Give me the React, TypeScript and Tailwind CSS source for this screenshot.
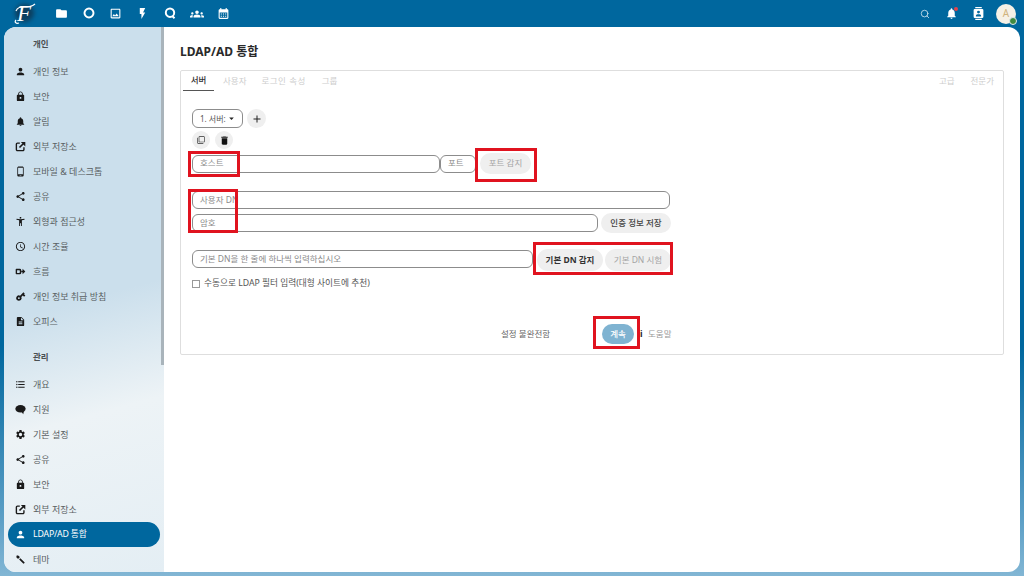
import { MdCalendarMonth, MdFolder, MdGroups, MdOutlineImage, MdFlashOn, MdPerson, MdLock, MdNotifications, MdPhoneAndroid, MdShare, MdAccessibilityNew, MdAccessTime, MdVpnKey, MdDescription, MdFormatListBulleted, MdSettings, MdBrush, MdDelete, MdAdd, MdArrowDropDown, MdFilterNone } from "react-icons/md";
import { LuSearch } from "react-icons/lu";
import type { IconType } from "react-icons";

const FlowIcon: IconType = (props) => (
    <svg viewBox="0 0 16 16" width={props.size} height={props.size} fill="currentColor">
        <path d="M2 4h5a2 2 0 0 1 2 2v4a2 2 0 0 1-2 2H2a1 1 0 0 1-1-1V5a1 1 0 0 1 1-1zm1 2v4h3a1 1 0 0 0 1-1V7a1 1 0 0 0-1-1H3z" />
        <path d="M9 7h2V4l4 4-4 4V9H9z" />
    </svg>
);

const ExternalIcon: IconType = (props) => (
    <svg viewBox="0 0 16 16" width={props.size} height={props.size} fill="none" stroke="currentColor">
        <path d="M7 3H3.5A1.5 1.5 0 0 0 2 4.5v8A1.5 1.5 0 0 0 3.5 14h8a1.5 1.5 0 0 0 1.5-1.5V9" strokeWidth="2" />
        <path d="M6.5 9.5 12 4" strokeWidth="2.4" />
        <path d="M8.5 1.5H15V8z" fill="currentColor" stroke="none" />
    </svg>
);

const BubbleIcon: IconType = (props) => (
    <svg viewBox="0 0 16 16" width={props.size} height={props.size} fill="currentColor">
        <ellipse cx="8" cy="7" rx="7.5" ry="5.5" />
        <path d="M9 11l3 4 1-5z" />
    </svg>
);

const KeyIcon: IconType = (props) => <MdVpnKey size={props.size} className="-rotate-45" />;
const ThemeIcon: IconType = (props) => <MdBrush size={props.size} className="rotate-90" />;

const RingIcon: IconType = (props) => (
    <svg viewBox="0 0 16 16" width={props.size} height={props.size} fill="none" stroke="currentColor" strokeWidth="2.6">
        <circle cx="8" cy="8" r="6" />
    </svg>
);

const TalkIcon: IconType = (props) => (
    <svg viewBox="0 0 16 16" width={props.size} height={props.size} fill="none" stroke="currentColor" strokeWidth="2.6">
        <circle cx="8" cy="7.6" r="5.6" />
        <path d="M11 12l3 3" />
    </svg>
);

const ContactsIcon: IconType = (props) => (
    <svg viewBox="0 0 16 16" width={props.size} height={props.size} fill="currentColor">
        <path d="M4 0h8v1.5H4zM4 14.5h8V16H4z" />
        <path fillRule="evenodd" d="M3.5 2.5h9A1.5 1.5 0 0 1 14 4v8a1.5 1.5 0 0 1-1.5 1.5h-9A1.5 1.5 0 0 1 2 12V4a1.5 1.5 0 0 1 1.5-1.5zM8 4.5A1.8 1.8 0 1 0 8 8.100A1.8 1.8 0 0 0 8 4.500zM4.800 11.800h6.400V10.800C11.200 9.500 9.500 9 8 9S4.800 9.500 4.800 10.800z" />
    </svg>
);

const personal: [IconType, string][] = [
    [MdPerson, "개인 정보"],
    [MdLock, "보안"],
    [MdNotifications, "알림"],
    [ExternalIcon, "외부 저장소"],
    [MdPhoneAndroid, "모바일 & 데스크톱"],
    [MdShare, "공유"],
    [MdAccessibilityNew, "외형과 접근성"],
    [MdAccessTime, "시간 조율"],
    [FlowIcon, "흐름"],
    [KeyIcon, "개인 정보 취급 방침"],
    [MdDescription, "오피스"],
];

const admin: [IconType, string, boolean?][] = [
    [MdFormatListBulleted, "개요"],
    [BubbleIcon, "지원"],
    [MdSettings, "기본 설정"],
    [MdShare, "공유"],
    [MdLock, "보안"],
    [ExternalIcon, "외부 저장소"],
    [MdPerson, "LDAP/AD 통합", true],
    [ThemeIcon, "테마"],
];

const topIcons: [IconType, number][] = [
    [MdFolder, 13],
    [RingIcon, 12],
    [MdOutlineImage, 13],
    [MdFlashOn, 13],
    [TalkIcon, 12],
    [MdGroups, 14],
    [MdCalendarMonth, 13],
];

const NavItem = ({ icon: Icon, label, active }: { icon: IconType; label: string; active?: boolean }) => (
    <div className={`flex h-[25px] items-center rounded-full ${active ? "bg-[#00679e] text-white" : "text-[#5a5f63]"}`}>
        <div className={`flex w-[25px] justify-center ${active ? "text-white" : "text-[#1a1a1a]"}`}>
            <Icon size={11} />
        </div>
        <span className={`leading-none ${active ? "text-[8.8px] tracking-[-0.2px]" : "text-[9px]"}`}>{label}</span>
    </div>
);

const Mark = ({ className }: { className: string }) => (
    <div className={`absolute border-[3px] border-[#e0131f] ${className}`}></div>
);

const fieldClass = "flex h-[18px] items-center rounded-[6px] border border-[#8c8c8c] bg-white pl-[7px] text-[8.5px] text-[#8a8a8a]";
const btnClass = "flex items-center justify-center rounded-full bg-[#efefef] text-[8.5px]";

const App = () => {
    return (
        <div className="relative flex h-[576px] w-[1024px] flex-col overflow-hidden bg-[linear-gradient(180deg,#00679e_0%,#00679e_60%,#5c9fc6_90%,#82b6d4_100%)] font-['Noto_Sans','Noto_Sans_CJK_KR',sans-serif]">
            {/* top bar */}
            <header className="flex h-[27px] shrink-0 items-center text-white">
                <div className="relative flex h-[27px] w-[48px] items-center justify-center">
                    <div className="absolute left-[15px] top-[4px] h-[18px] w-[19px] rounded-full bg-[#0c3f5f] blur-[2px]"></div>
                    <span className="relative font-['Liberation_Serif',serif] text-[23px] italic leading-none text-white">F</span>
                    <svg viewBox="0 0 24 22" width="24" height="22" className="absolute left-[13px] top-[3px]" fill="none" stroke="#fff" strokeWidth="1.2">
                        <path d="M3 8C5 2 11 5 15 4s5-1 7-3" />
                        <path d="M6 20c-3 1-5-1-3-3" />
                    </svg>
                </div>
                <div className="flex">
                    {topIcons.map(([Icon, size], i) => (
                        <div key={i} className="flex w-[27px] justify-center">
                            <Icon size={size} />
                        </div>
                    ))}
                </div>
                <div className="ml-auto flex items-center text-white">
                    <div className="flex w-[27px] justify-center text-[#cfe3ef]"><LuSearch size={10} /></div>
                    <div className="relative flex w-[27px] justify-center">
                        <MdNotifications size={13} />
                        <div className="absolute right-[7px] top-0 h-[4px] w-[4px] rounded-full bg-[#e0434b]"></div>
                    </div>
                    <div className="flex w-[27px] justify-center"><ContactsIcon size={13} /></div>
                    <div className="relative ml-[4px] mr-[8px] flex h-[20px] w-[20px] items-center justify-center rounded-full bg-[#f6f1e6] text-[10px] text-[#d0b37d]">
                        A
                        <div className="absolute -bottom-[1px] -right-[1px] h-[8px] w-[8px] rounded-full border border-[#dfe9ef] bg-[#3f8a3f]"></div>
                    </div>
                </div>
            </header>

            {/* app frame */}
            <div className="mx-[4px] mb-[4px] flex min-h-0 flex-1 overflow-hidden rounded-[12px] bg-white">
                <aside className="flex w-[160px] shrink-0 bg-[linear-gradient(165deg,#cbdfec_0%,#cbdfec_50%,#edf3f6_70%,#e4eef4_100%)]">
                    <nav className="min-w-0 flex-1 pl-[4px] pr-[1px]">
                        <div className="flex h-[32px] items-center pl-[25px] pt-[2px] text-[8.5px] font-bold text-[#4a4f52]">개인</div>
                        {personal.map(([icon, label]) => (
                            <NavItem key={label} icon={icon} label={label} />
                        ))}
                        <div className="mt-[6px] flex h-[32px] items-center pl-[25px] pt-[2px] text-[8.5px] font-bold text-[#4a4f52]">관리</div>
                        {admin.map(([icon, label, active]) => (
                            <NavItem key={label + (active ? "a" : "")} icon={icon} label={label} active={active} />
                        ))}
                    </nav>
                    <div className="w-[3px] shrink-0">
                        <div className="h-[338px] w-full bg-[#a9b4bb]"></div>
                    </div>
                </aside>

                <main className="min-w-0 flex-1 pl-[16px] pr-[16px]">
                    <h2 className="pt-[17px] text-[12px] font-bold leading-[15px] text-[#2a2a2a]">LDAP/AD 통합</h2>
                    <section className="mt-[11px] h-[285px] rounded-[2px] border border-[#dedede]">
                        {/* tabs */}
                        <div className="flex h-[20px] items-stretch justify-between px-[2px] text-[8.5px] text-[#cdcdcd]">
                            <div className="flex">
                                <div className="flex w-[31px] items-center justify-center border-b border-[#555] font-medium text-[#333]">서버</div>
                                <div className="ml-[9px] flex items-center">사용자</div>
                                <div className="ml-[15px] flex items-center tracking-[0.5px]">로그인 속성</div>
                                <div className="ml-[16px] flex items-center">그룹</div>
                            </div>
                            <div className="flex pr-[7px]">
                                <div className="flex items-center">고급</div>
                                <div className="ml-[16px] flex items-center">전문가</div>
                            </div>
                        </div>

                        <div className="pl-[11px] pt-[18px]">
                            <div className="flex items-center gap-[4px]">
                                <div className="flex h-[19px] w-[51px] items-center rounded-[6px] border border-[#8c8c8c] pl-[7px] text-[8px] text-[#555]">
                                    1. 서버:
                                    <MdArrowDropDown size={11} className="text-[#222]" />
                                </div>
                                <div className={`${btnClass} h-[19px] w-[19px] text-[#222]`}><MdAdd size={12} /></div>
                            </div>
                            <div className="mt-[3px] flex gap-[5px]">
                                <div className={`${btnClass} h-[18px] w-[18px] text-[#333]`}><MdFilterNone size={8} /></div>
                                <div className={`${btnClass} h-[18px] w-[18px] text-[#111]`}><MdDelete size={11} /></div>
                            </div>

                            <div className="mt-[4px] flex items-center">
                                <div className={`${fieldClass} w-[248px]`}>호스트</div>
                                <div className={`${fieldClass} w-[36px]`}>포트</div>
                                <div className={`${btnClass} ml-[4px] h-[21px] w-[51px] text-[#a5a5a5]`}>포트 감지</div>
                            </div>

                            <div className={`${fieldClass} mt-[17px] w-[478px]`}>사용자 DN</div>
                            <div className="mt-[4px] flex items-center">
                                <div className={`${fieldClass} w-[406px]`}>암호</div>
                                <div className={`${btnClass} ml-[3px] h-[20px] w-[70px] font-medium text-[#444]`}>인증 정보 저장</div>
                            </div>

                            <div className="mt-[16px] flex items-start">
                                <div className={`${fieldClass} mt-[1px] w-[341px] items-end pb-[1px]`}>기본 DN을 한 줄에 하나씩 입력하십시오</div>
                                <div className={`${btnClass} ml-[4px] h-[22px] w-[66px] font-bold text-[#333]`}>기본 DN 감지</div>
                                <div className={`${btnClass} ml-[2px] h-[22px] w-[66px] text-[#a5a5a5]`}>기본 DN 시험</div>
                            </div>

                            <div className="mt-[6px] flex items-center text-[8.7px] text-[#555]">
                                <div className="h-[8px] w-[8px] border border-[#999] bg-white"></div>
                                <span className="ml-[4px]">수동으로 LDAP 필터 입력(대형 사이트에 추천)</span>
                            </div>

                            <div className="mt-[34px] flex items-center pl-[309px] text-[8.5px]">
                                <span className="w-[101px] text-[#666]">설정 불완전함</span>
                                <div className="flex h-[20px] w-[32px] items-center justify-center rounded-full bg-[#7fb3d1] font-medium text-white">계속</div>
                                <span className="ml-[6px] w-[3px] font-bold text-[#222]">i</span>
                                <span className="ml-[5px] text-[#999]">도움말</span>
                            </div>
                        </div>
                    </section>
                </main>
            </div>

            {/* red annotations */}
            <Mark className="left-[188px] top-[151px] h-[26px] w-[52px]" />
            <Mark className="left-[475px] top-[148px] h-[34px] w-[62px]" />
            <Mark className="left-[188px] top-[189px] h-[44px] w-[50px]" />
            <Mark className="left-[533px] top-[242px] h-[33px] w-[140px]" />
            <Mark className="left-[593px] top-[316px] h-[33px] w-[47px]" />
        </div>
    );
};

export default App;
